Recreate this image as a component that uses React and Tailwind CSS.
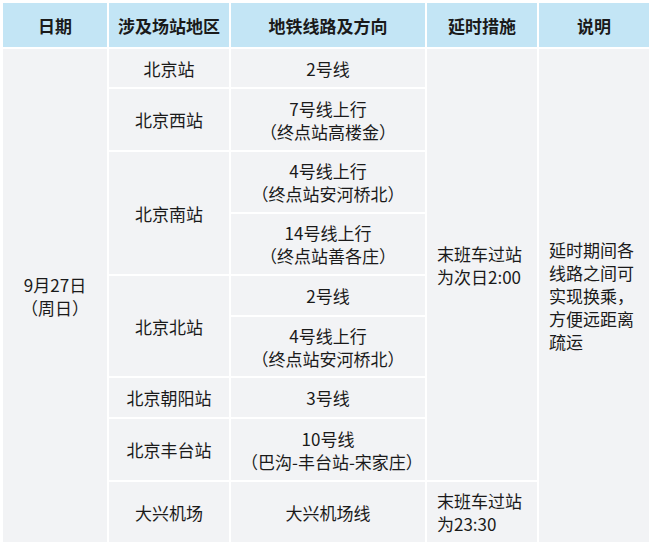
const rows = [
  { station: '北京站', span: 1, lines: [['2号线']], h: ['h-[40px]'] },
  { station: '北京西站', span: 1, lines: [['7号线上行', '（终点站高楼金）']], h: ['h-[63px]'] },
  {
    station: '北京南站',
    span: 2,
    lines: [['4号线上行', '（终点站安河桥北）'], ['14号线上行', '（终点站善各庄）']],
    h: ['h-[62px]', 'h-[62px]'],
  },
  { station: '北京北站', span: 2, lines: [['2号线'], ['4号线上行', '（终点站安河桥北）']], h: ['h-[41px]', 'h-[61px]'] },
  { station: '北京朝阳站', span: 1, lines: [['3号线']], h: ['h-[41px]'] },
  { station: '北京丰台站', span: 1, lines: [['10号线', '（巴沟-丰台站-宋家庄）']], h: ['h-[63px]'] },
]

const cell = 'border-2 border-white px-2.5 py-0 leading-[23px] align-middle'

export default function App() {
  const flat = []
  rows.forEach((r, ri) => {
    r.lines.forEach((l, li) => flat.push({ r, ri, l, li }))
  })

  return (
    <div className="w-[650px] h-[545px] overflow-hidden bg-white p-px" style={{ fontFamily: '"Noto Sans CJK SC", "Noto Sans", sans-serif' }}>
      <table className="w-[648px] table-fixed border-collapse text-[17px] text-[#1a1a1a]">
        <colgroup>
          <col className="w-[106px]" />
          <col className="w-[122px]" />
          <col className="w-[196px]" />
          <col className="w-[112px]" />
          <col className="w-[112px]" />
        </colgroup>
        <thead>
          <tr className="h-[46px] bg-[#c3e5f5]">
            {['日期', '涉及场站地区', '地铁线路及方向', '延时措施', '说明'].map((h) => (
              <th key={h} className="border-2 border-white py-0 text-center font-bold leading-[23px]">
                {h}
              </th>
            ))}
          </tr>
        </thead>
        <tbody className="bg-[#f2f3f5]">
          {flat.map(({ r, ri, l, li }) => (
            <tr key={`${ri}-${li}`} className={r.h[li]}>
              {ri === 0 && li === 0 && (
                <td rowSpan={9} className={`${cell} text-center`}>
                  9月27日
                  <br />
                  （周日）
                </td>
              )}
              {li === 0 && (
                <td rowSpan={r.span} className={`${cell} text-center`}>
                  {r.station}
                </td>
              )}
              <td className={`${cell} text-center`}>
                {l.map((t, i) => (
                  <div key={i}>{t}</div>
                ))}
              </td>
              {ri === 0 && li === 0 && (
                <>
                  <td rowSpan={8} className={cell}>
                    末班车过站为次日2:00
                  </td>
                  <td rowSpan={9} className={cell}>
                    延时期间各线路之间可实现换乘，方便远距离疏运
                  </td>
                </>
              )}
            </tr>
          ))}
          <tr className="h-[62px]">
            <td className={`${cell} text-center`}>大兴机场</td>
            <td className={`${cell} text-center`}>大兴机场线</td>
            <td className={cell}>
              末班车过站
              <br />
              为23:30
            </td>
          </tr>
        </tbody>
      </table>
    </div>
  )
}
